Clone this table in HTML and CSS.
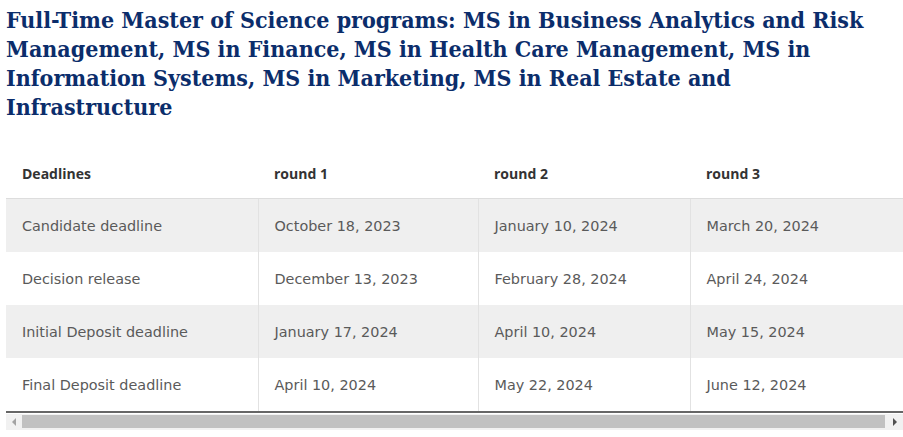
FILE: index.html
```html
<!DOCTYPE html>
<html lang="en">
<head>
  <meta charset="UTF-8">
  <title>Deadlines</title>
  <link rel="stylesheet" href="styles.css">
</head>
<body>
  <h2 class="program-title">Full-Time Master of Science programs: MS in Business Analytics and Risk Management, MS in Finance, MS in Health Care Management, MS in Information Systems, MS in Marketing, MS in Real Estate and Infrastructure</h2>

  <div class="table-scroll">
    <table class="deadlines">
      <thead>
        <tr>
          <th class="col-label">Deadlines</th>
          <th class="col-r1">round 1</th>
          <th class="col-r2">round 2</th>
          <th class="col-r3">round 3</th>
        </tr>
      </thead>
      <tbody>
        <tr>
          <td>Candidate deadline</td>
          <td>October 18, 2023</td>
          <td>January 10, 2024</td>
          <td>March 20, 2024</td>
        </tr>
        <tr>
          <td>Decision release</td>
          <td>December 13, 2023</td>
          <td>February 28, 2024</td>
          <td>April 24, 2024</td>
        </tr>
        <tr>
          <td>Initial Deposit deadline</td>
          <td>January 17, 2024</td>
          <td>April 10, 2024</td>
          <td>May 15, 2024</td>
        </tr>
        <tr>
          <td>Final Deposit deadline</td>
          <td>April 10, 2024</td>
          <td>May 22, 2024</td>
          <td>June 12, 2024</td>
        </tr>
      </tbody>
    </table>
  </div>

  <div class="scrollbar">
    <span class="scroll-btn"><span class="arrow arrow-left"></span></span>
    <span class="scroll-thumb"></span>
    <span class="scroll-btn"><span class="arrow arrow-right"></span></span>
  </div>
</body>
</html>
```

FILE: styles.css
```css
body {
  margin: 0;
  padding: 0 0 0 6px;
  background: #fff;
  font-family: 'DejaVu Sans', sans-serif;
}

.program-title {
  margin: 5px 0 0 0;
  font-family: 'DejaVu Serif', serif;
  font-stretch: condensed;
  font-weight: bold;
  font-size: 23px;
  line-height: 29px;
  color: #0b2d6b;
}

.table-scroll {
  margin-top: 27px;
  overflow: hidden;
}

.deadlines {
  width: 900px;
  border-collapse: collapse;
  border-bottom: 2px solid #666;
}

.deadlines th,
.deadlines td {
  text-align: left;
  padding: 0 16px;
}

.deadlines th {
  height: 50px;
  color: #333;
  font-family: 'Open Sans', sans-serif;
  font-size: 14px;
  font-weight: bold;
  border-bottom: 1px solid #ddd;
}

.deadlines td {
  height: 53px;
  color: #5a5a5a;
  font-size: 14.4px;
}

.deadlines td + td {
  border-left: 1px solid #e2e2e2;
}

.deadlines tbody tr:nth-child(odd) {
  background: #efefef;
}

.col-label { width: 220px; }
.col-r1 { width: 188px; }
.col-r2 { width: 180px; }

/* horizontal scrollbar under the table */
.scrollbar {
  display: flex;
  height: 16px;
  margin-top: 1px;
  background: #f1f1f1;
}

.scroll-btn {
  width: 16px;
  display: flex;
  align-items: center;
  justify-content: center;
}

.scroll-thumb {
  flex: 1;
  margin: 1px 2px 2px 0;
  background: #c1c1c1;
}

.arrow {
  width: 0;
  height: 0;
  border-top: 4px solid transparent;
  border-bottom: 4px solid transparent;
}

.arrow-left {
  border-right: 4px solid #a3a3a3;
}

.arrow-right {
  border-left: 4px solid #505050;
}
```
